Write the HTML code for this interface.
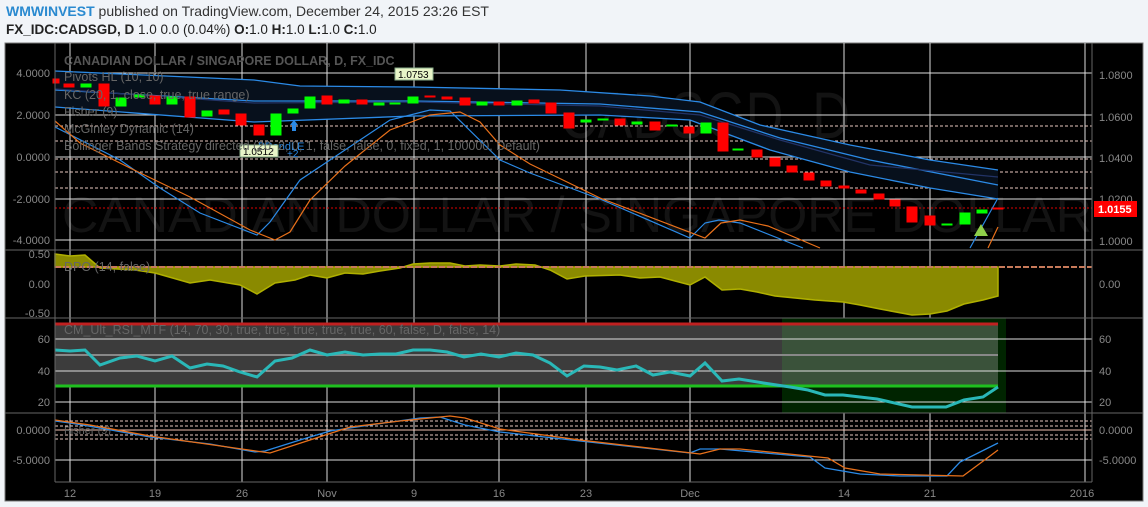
<!DOCTYPE html>
<html><head><meta charset="utf-8"><style>
body{margin:0;width:1148px;height:507px;background:#f1f4f8;font-family:"Liberation Sans",sans-serif;overflow:hidden;position:relative}
.h1{position:absolute;left:6px;top:3px;font-size:14px;color:#333}
.h1 b{color:#2a8ad0}
.h2{position:absolute;left:6px;top:22px;font-size:13.5px;color:#222}
svg{position:absolute;left:0;top:0}
</style></head><body>
<div class="h1"><b>WMWINVEST</b> published on TradingView.com, December 24, 2015 23:26 EST</div>
<div class="h2"><b>FX_IDC:CADSGD, D</b> 1.0 0.0 (0.04%) <b>O:</b>1.0 <b>H:</b>1.0 <b>L:</b>1.0 <b>C:</b>1.0</div>
<svg width="1148" height="507" font-family="Liberation Sans, sans-serif">
<defs><clipPath id="c"><rect x="55" y="43" width="1037" height="207"/></clipPath></defs>
<rect x="5" y="43" width="1138" height="458" fill="#000" stroke="#777"/>
<!-- watermark -->
<g clip-path="url(#c)">
<text x="560" y="138" font-size="66" fill="#131313" textLength="290" lengthAdjust="spacingAndGlyphs">CADSGD, D</text>
<text x="62" y="232" font-size="50" fill="#131313" textLength="1030" lengthAdjust="spacingAndGlyphs">CANADIAN DOLLAR / SINGAPORE DOLLAR</text>
</g>
<!-- vertical grid -->
<g stroke="#ddd" stroke-width="1">
<line x1="70" y1="43" x2="70" y2="482"/><line x1="155" y1="43" x2="155" y2="482"/><line x1="242" y1="43" x2="242" y2="482"/><line x1="327" y1="43" x2="327" y2="482"/><line x1="414" y1="43" x2="414" y2="482"/><line x1="499" y1="43" x2="499" y2="482"/><line x1="586" y1="43" x2="586" y2="482"/><line x1="690" y1="43" x2="690" y2="482"/><line x1="844" y1="43" x2="844" y2="482"/><line x1="930" y1="43" x2="930" y2="482"/><line x1="1085" y1="43" x2="1085" y2="482"/>
</g>
<!-- main horizontal grid -->
<g stroke="#ddd"><line x1="55" y1="73" x2="1092" y2="73"/><line x1="55" y1="115" x2="1092" y2="115"/><line x1="55" y1="157" x2="1092" y2="157"/><line x1="55" y1="199" x2="1092" y2="199"/><line x1="55" y1="240" x2="1092" y2="240"/></g>
<g stroke="#e8c8c0" stroke-dasharray="3,2"><line x1="55" y1="126" x2="1092" y2="126"/><line x1="55" y1="141" x2="1092" y2="141"/><line x1="55" y1="159" x2="1092" y2="159"/><line x1="55" y1="172" x2="1092" y2="172"/><line x1="55" y1="188" x2="1092" y2="188"/></g>
<line x1="55" y1="208" x2="1092" y2="208" stroke="#d00" stroke-dasharray="2,2"/>
<!-- bands -->
<path d="M55,71 L254,80 300,86 413,87 560,90 650,96 700,102 760,125 850,145 930,160 998,170 L998,199 930,188 850,172 770,150 690,120 600,115 413,116 254,122 55,107Z" fill="#07101c"/>
<g fill="none" stroke="#2b8ae6" stroke-width="1.3">
<polyline points="55,71 254,80 300,86 413,87 560,90 650,96 700,102 760,125 850,145 930,160 998,170"/>
<polyline points="55,90 254,101 413,101 600,104 700,112 780,138 870,160 998,185"/>
<polyline points="55,107 254,122 413,116 600,115 690,120 770,150 850,172 930,188 998,199"/>
</g>
<polyline points="55,89 254,103 413,102 600,106 700,115 780,140 870,165 998,177" fill="none" stroke="#223366" stroke-width="1.3"/>
<!-- fisher lines main -->
<polyline fill="none" stroke="#2b8ae6" stroke-width="1.2" points="55,127 120,160 160,188 200,213 257,235 270,222 300,180 330,160 360,140 390,120 430,110 450,111 500,160 530,173 600,199 690,238 705,223 719,220 740,223 803,248"/>
<polyline fill="none" stroke="#e8701a" stroke-width="1.2" points="55,121 80,143 130,168 190,197 250,230 275,240 290,232 310,200 345,166 390,130 430,115 460,112 480,122 500,145 530,164 600,198 705,238 721,223 740,220 768,226 820,248"/>
<polyline fill="none" stroke="#2b8ae6" stroke-width="1.2" points="970,248 998,198"/>
<polyline fill="none" stroke="#e8701a" stroke-width="1.2" points="988,248 998,227"/>
<!-- candles -->
<g stroke-width="1">
<g fill="#f00" stroke="#f00">
<rect x="53" y="79" width="6" height="4"/><rect x="64" y="84" width="10" height="3"/><rect x="99" y="84" width="10" height="22"/><rect x="150" y="96" width="10" height="8"/><rect x="185" y="97" width="10" height="20"/><rect x="219" y="110" width="10" height="4"/><rect x="236" y="114" width="10" height="11"/><rect x="254" y="125" width="10" height="10"/><rect x="322" y="96" width="10" height="8"/><rect x="357" y="100" width="10" height="4"/><rect x="425" y="96" width="10" height="1"/><rect x="442" y="97" width="10" height="2"/><rect x="460" y="98" width="10" height="7"/><rect x="494" y="102" width="10" height="3"/><rect x="529" y="100" width="10" height="3"/><rect x="546" y="103" width="10" height="10"/><rect x="564" y="113" width="10" height="15"/><rect x="615" y="119" width="10" height="6"/><rect x="650" y="122" width="10" height="8"/><rect x="684" y="127" width="10" height="6"/><rect x="718" y="123" width="10" height="28"/><rect x="752" y="150" width="10" height="7"/><rect x="770" y="158" width="10" height="8"/><rect x="787" y="166" width="10" height="6"/><rect x="804" y="173" width="10" height="7"/><rect x="821" y="181" width="10" height="5"/><rect x="839" y="186" width="10" height="2"/><rect x="856" y="190" width="10" height="3"/><rect x="874" y="194" width="10" height="5"/><rect x="890" y="200" width="10" height="6"/><rect x="907" y="207" width="10" height="15"/><rect x="925" y="216" width="10" height="9"/><rect x="993" y="208" width="10" height="1"/>
</g>
<g fill="#0f0" stroke="#0f0">
<rect x="81" y="84" width="10" height="3"/><rect x="116" y="98" width="10" height="8"/><rect x="134" y="95" width="10" height="2"/><rect x="167" y="97" width="10" height="7"/><rect x="202" y="111" width="10" height="5"/><rect x="271" y="114" width="10" height="21"/><rect x="288" y="109" width="10" height="4"/><rect x="305" y="97" width="10" height="11"/><rect x="339" y="100" width="10" height="3"/><rect x="374" y="103" width="10" height="2"/><rect x="390" y="103" width="10" height="1"/><rect x="408" y="97" width="10" height="6"/><rect x="477" y="102" width="10" height="3"/><rect x="512" y="101" width="10" height="4"/><rect x="581" y="120" width="10" height="2"/><rect x="598" y="119" width="10" height="1"/><rect x="632" y="122" width="10" height="2"/><rect x="667" y="125" width="10" height="1"/><rect x="701" y="123" width="10" height="10"/><rect x="733" y="149" width="10" height="1"/><rect x="942" y="224" width="10" height="1"/><rect x="960" y="213" width="10" height="11"/><rect x="977" y="210" width="10" height="3"/>
</g>
</g>
<polygon points="981,224 988,236 974,236" fill="#8fcf4a"/>
<path d="M290,125 l4,-5 4,5 h-2 v6 h-4 v-6z" fill="#2b8ae6"/>
<text x="258" y="150" font-size="11" fill="#2b8ae6">BBandLE</text>
<text x="287" y="157" font-size="10" fill="#2b8ae6">+2</text>
<rect x="240" y="145" width="38" height="12" fill="#e8f5c8" stroke="#8a8"/><text x="243" y="155" font-size="10" fill="#000">1.0512</text>
<rect x="395" y="68" width="38" height="12" fill="#e8f5c8" stroke="#8a8"/><text x="398" y="78" font-size="10" fill="#000">1.0753</text>
<!-- legends -->
<g font-size="12.5" fill="#666">
<text x="64" y="65" font-weight="bold" fill="#555">CANADIAN DOLLAR / SINGAPORE DOLLAR, D, FX_IDC</text>
<text x="64" y="81">Pivots HL (10, 10)</text>
<text x="64" y="99">KC (20, 1, close, true, true range)</text>
<text x="64" y="116">Fisher (9)</text>
<text x="64" y="133">McGinley Dynamic (14)</text>
<text x="64" y="150">Bollinger Bands Strategy directed (20, 2, 0, 1, false, false, 0, fixed, 1, 100000, Default)</text>
</g>
<!-- DPO -->
<path d="M55,254 70,256 85,255 100,268 135,270 155,273 190,283 210,280 240,285 257,294 275,283 295,280 310,275 327,278 345,273 363,274 380,271 400,268 413,264 430,263 450,263 465,266 480,265 500,266 516,264 535,265 550,270 567,279 585,276 620,275 640,278 660,277 675,281 690,285 705,277 722,290 740,289 757,292 775,296 795,298 815,300 843,302 860,305 880,309 912,315 930,314 947,311 964,304 983,300 998,296 L998,267 55,267Z" fill="#8a8a00" stroke="#b0b000" stroke-width="1.5"/>
<line x1="55" y1="267" x2="1092" y2="267" stroke="#c87a5a" stroke-width="2" stroke-dasharray="6,2"/>
<text x="64" y="271" font-size="12.5" fill="#666">DPO (14, false)</text>
<!-- RSI -->
<rect x="55" y="324" width="945" height="62" fill="#3c3c3c"/>
<rect x="782" y="318" width="224" height="95" fill="#002400"/>
<rect x="782" y="324" width="216" height="62" fill="#3a523a"/>
<g stroke="#ddd"><line x1="55" y1="339" x2="1092" y2="339"/><line x1="55" y1="371" x2="1092" y2="371"/><line x1="55" y1="402" x2="1092" y2="402"/></g>
<line x1="55" y1="355" x2="998" y2="355" stroke="#888" stroke-width="2"/>
<line x1="55" y1="324" x2="998" y2="324" stroke="#c02020" stroke-width="3"/>
<line x1="55" y1="386" x2="998" y2="386" stroke="#1fbf1f" stroke-width="3"/>
<polyline fill="none" stroke="#2ab8b8" stroke-width="3" points="55,350 70,351 85,350 100,365 120,358 137,356 155,361 172,356 190,368 207,364 223,366 240,372 257,377 275,361 292,358 310,350 327,355 345,352 363,355 380,354 396,354 413,350 430,350 447,352 464,357 481,354 499,357 516,353 533,355 550,363 567,376 584,366 600,367 617,370 636,366 653,375 670,372 690,376 705,363 722,381 739,379 770,384 790,387 808,390 825,395 843,395 877,399 912,407 946,407 964,400 983,397 998,387"/>
<text x="64" y="334" font-size="12.5" fill="#666">CM_Ult_RSI_MTF (14, 70, 30, true, true, true, true, true, 60, false, D, false, 14)</text>
<!-- bottom fisher -->
<line x1="55" y1="430" x2="1092" y2="430" stroke="#f0c0b0"/>
<line x1="55" y1="460" x2="1092" y2="460" stroke="#ddd"/>
<g stroke="#e8c8c0" stroke-dasharray="3,2"><line x1="55" y1="421" x2="1092" y2="421"/><line x1="55" y1="426" x2="1092" y2="426"/><line x1="55" y1="435" x2="1092" y2="435"/><line x1="55" y1="439" x2="1092" y2="439"/></g>
<text x="64" y="434" font-size="11" fill="#666">Fisher (9)</text>
<polyline fill="none" stroke="#2b8ae6" stroke-width="1.3" points="55,421 70,423 100,428 150,437 210,444 255,452 265,451 300,440 330,431 370,425 420,418 440,417 465,425 500,432 580,441 690,453 700,449 720,449 810,457 825,468 860,474 900,476 947,476 960,462 998,443"/>
<polyline fill="none" stroke="#e8701a" stroke-width="1.3" points="55,420 90,425 150,436 270,453 310,440 350,427 400,421 450,416 465,418 500,429 580,440 700,454 720,449 740,449 828,458 845,468 880,474 963,476 990,456 998,450"/>
<!-- separators -->
<g stroke="#666"><line x1="5" y1="250" x2="1143" y2="250"/><line x1="5" y1="318" x2="1143" y2="318"/><line x1="5" y1="413" x2="1143" y2="413"/><line x1="55" y1="482" x2="1092" y2="482"/><line x1="55" y1="43" x2="55" y2="482"/><line x1="1092" y1="43" x2="1092" y2="482"/></g>
<!-- axis labels -->
<g font-size="11" fill="#888" text-anchor="end">
<text x="50" y="77">4.0000</text><text x="50" y="119">2.0000</text><text x="50" y="161">0.0000</text><text x="50" y="203">-2.0000</text><text x="50" y="244">-4.0000</text>
<text x="50" y="258">0.50</text><text x="50" y="288">0.00</text><text x="50" y="317">-0.50</text>
<text x="50" y="343">60</text><text x="50" y="375">40</text><text x="50" y="406">20</text>
<text x="50" y="434">0.0000</text><text x="50" y="464">-5.0000</text>
</g>
<g font-size="11" fill="#888">
<text x="1099" y="79">1.0800</text><text x="1099" y="121">1.0600</text><text x="1099" y="162">1.0400</text><text x="1099" y="203">1.0200</text><text x="1099" y="245">1.0000</text>
<text x="1099" y="288">0.00</text><text x="1099" y="343">60</text><text x="1099" y="375">40</text><text x="1099" y="406">20</text>
<text x="1099" y="434">0.0000</text><text x="1099" y="464">-5.0000</text>
</g>
<rect x="1094" y="201" width="43" height="16" fill="#f00"/><text x="1098" y="213" font-size="11" font-weight="bold" fill="#fff">1.0155</text>
<g font-size="11" fill="#888" text-anchor="middle">
<text x="70" y="497">12</text><text x="155" y="497">19</text><text x="242" y="497">26</text><text x="327" y="497">Nov</text><text x="414" y="497">9</text><text x="499" y="497">16</text><text x="586" y="497">23</text><text x="690" y="497">Dec</text><text x="844" y="497">14</text><text x="930" y="497">21</text><text x="1082" y="497">2016</text>
</g>
</svg>
</body></html>
